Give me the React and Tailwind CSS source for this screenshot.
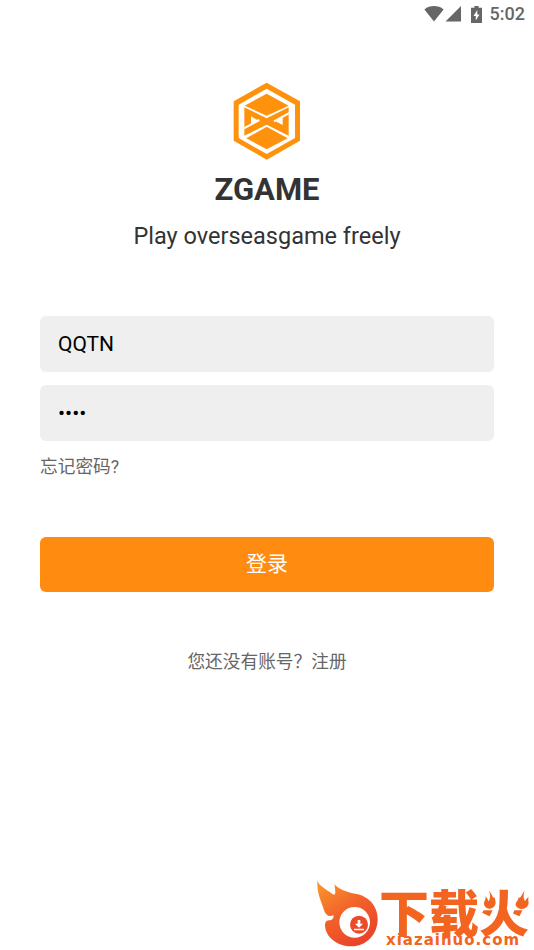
import React from 'react';

function StatusBar() {
  return (
    <div className="flex h-7 items-center justify-end pr-[9px] text-[#666666]">
      <svg className="h-[16px] w-[20px]" viewBox="0 0 20 16" fill="currentColor">
        <path d="M0.4 3.4C6 -1 14 -1 19.6 3.4L10 15.6Z" />
      </svg>
      <svg className="ml-[1px] h-[16px] w-[17px]" viewBox="0 0 17 16" fill="currentColor">
        <path d="M16 0V15.6H0.5Z" />
      </svg>
      <svg className="ml-[9px] h-[17px] w-[11px]" viewBox="0 0 11 17">
        <path fill="currentColor" d="M3.4 0h4.2v1.8H11V17H0V1.8h3.4z" />
        <path fill="#fff" d="M6.3 4L2.5 10h2.3v4.6L8.5 8.5H6.3z" />
      </svg>
      <span className="ml-[8px] font-[Roboto] text-[18px] leading-7 font-medium">5:02</span>
    </div>
  );
}

function Logo() {
  return (
    <svg className="h-[90px] w-[90px]" viewBox="0 0 270 270">
      <path fill="#ff920c" d="M134 20L234 76V194L134 251L35 194V76Z" />
      <path fill="#fff" d="M134 38L219 86V186L134 234L50 186V86Z" />
      <path fill="#ff920c" d="M134 53L200 89L134 119L68 89Z" />
      <path fill="#ff920c" d="M134 152L197 187L134 220L73 187Z" />
      <path fill="#ff920c" d="M67 94L134 127L200 94V179L134 146L67 179Z" />
      <path fill="#fff" d="M87 121L110 134L87 147ZM182 121L158 134L182 147Z" />
      <path stroke="#fff" strokeWidth="6" fill="none" d="M64 158L112 132M204 110L156 136" />
    </svg>
  );
}

function Watermark() {
  return (
    <div className="flex h-[75px] w-[224px] items-start text-[#f2641f]">
      <svg className="h-[75px] w-[69px] shrink-0" viewBox="0 0 207 225">
        <defs>
          <linearGradient id="flame" x1="0" y1="0" x2="0.6" y2="1">
            <stop offset="0" stopColor="#fb9a2b" />
            <stop offset="0.55" stopColor="#f2612a" />
            <stop offset="1" stopColor="#ea4429" />
          </linearGradient>
        </defs>
        <path fill="url(#flame)" d="M22 16C28 35 49 43 64 55C76 65 79 58 73 28C88 43 103 48 128 55C173 60 203 91 203 132C203 179 169 214 124 214C83 214 48 188 45 153C44 143 48 137 56 136C66 136 72 131 70 120C59 128 47 121 42 106C33 76 20 55 22 16Z" />
        <circle cx="134" cy="142" r="46" fill="#fff" />
        <circle cx="147" cy="149" r="27" fill="#ec4b2a" />
        <path fill="#fff" d="M143 135h8v11h8l-12 12l-12-12h8zM132 161h30v5h-30z" />
      </svg>
      <div className="flex flex-col pt-[12px]">
        <div className="relative h-[47px] w-[151px] font-['Noto_Sans_CJK_SC',sans-serif] text-[50px] leading-[47px] font-black whitespace-nowrap">
          下载火
          <svg className="absolute top-[4px] left-[104px] h-[30px] w-[47px]" viewBox="0 0 141 90">
            <path fill="#fff" d="M0 0H47V58H0ZM87 0H141V58H87Z" />
            <path fill="currentColor" d="M18 0C30 12 27 22 36 20C35 28 42 34 34 46C27 56 9 56 4 43C0 32 9 28 8 16C14 22 14 28 17 31C22 21 23 12 18 0ZM125 0C113 12 116 22 106 20C108 28 95 34 98 43C103 56 126 59 135 43C140 34 133 29 137 17C130 23 128 27 126 31C121 21 120 12 125 0Z" />
          </svg>
        </div>
        <span className="pl-[7px] font-['DejaVu_Sans'] text-[15px] leading-[12px] font-bold tracking-[1px]">xiazaihuo.com</span>
      </div>
    </div>
  );
}

export default function App() {
  return (
    <div className="flex h-[950px] w-[534px] flex-col overflow-hidden bg-white font-[Roboto,'Noto_Sans_CJK_SC',sans-serif]">
      <StatusBar />

      <div className="mt-12 flex flex-col items-center text-[#333333]">
        <Logo />
        <h1 className="mt-1 text-[31px] leading-10 font-bold">ZGAME</h1>
        <p className="mt-[10px] text-[23.5px] leading-8">Play overseasgame freely</p>
      </div>

      <form className="mt-16 flex flex-col px-10">
        <input
          type="text"
          defaultValue="QQTN"
          className="h-14 rounded-md bg-[#efefef] px-[18px] text-[21px] text-black outline-none"
        />
        <input
          type="password"
          defaultValue="1234"
          className="mt-[13px] h-14 rounded-md bg-[#efefef] px-[18px] text-[21px] text-black outline-none"
        />
        <a className="mt-3 self-start text-[17.7px] leading-7 text-[#666666]">忘记密码?</a>
        <button type="button" className="mt-14 h-[55px] rounded-md bg-[#ff8c10] text-[21px] text-white">
          登录
        </button>
      </form>

      <p className="mt-14 text-center text-[17.7px] leading-7 text-[#666666]">您还没有账号？注册</p>

      <div className="mt-auto self-end">
        <Watermark />
      </div>
    </div>
  );
}
